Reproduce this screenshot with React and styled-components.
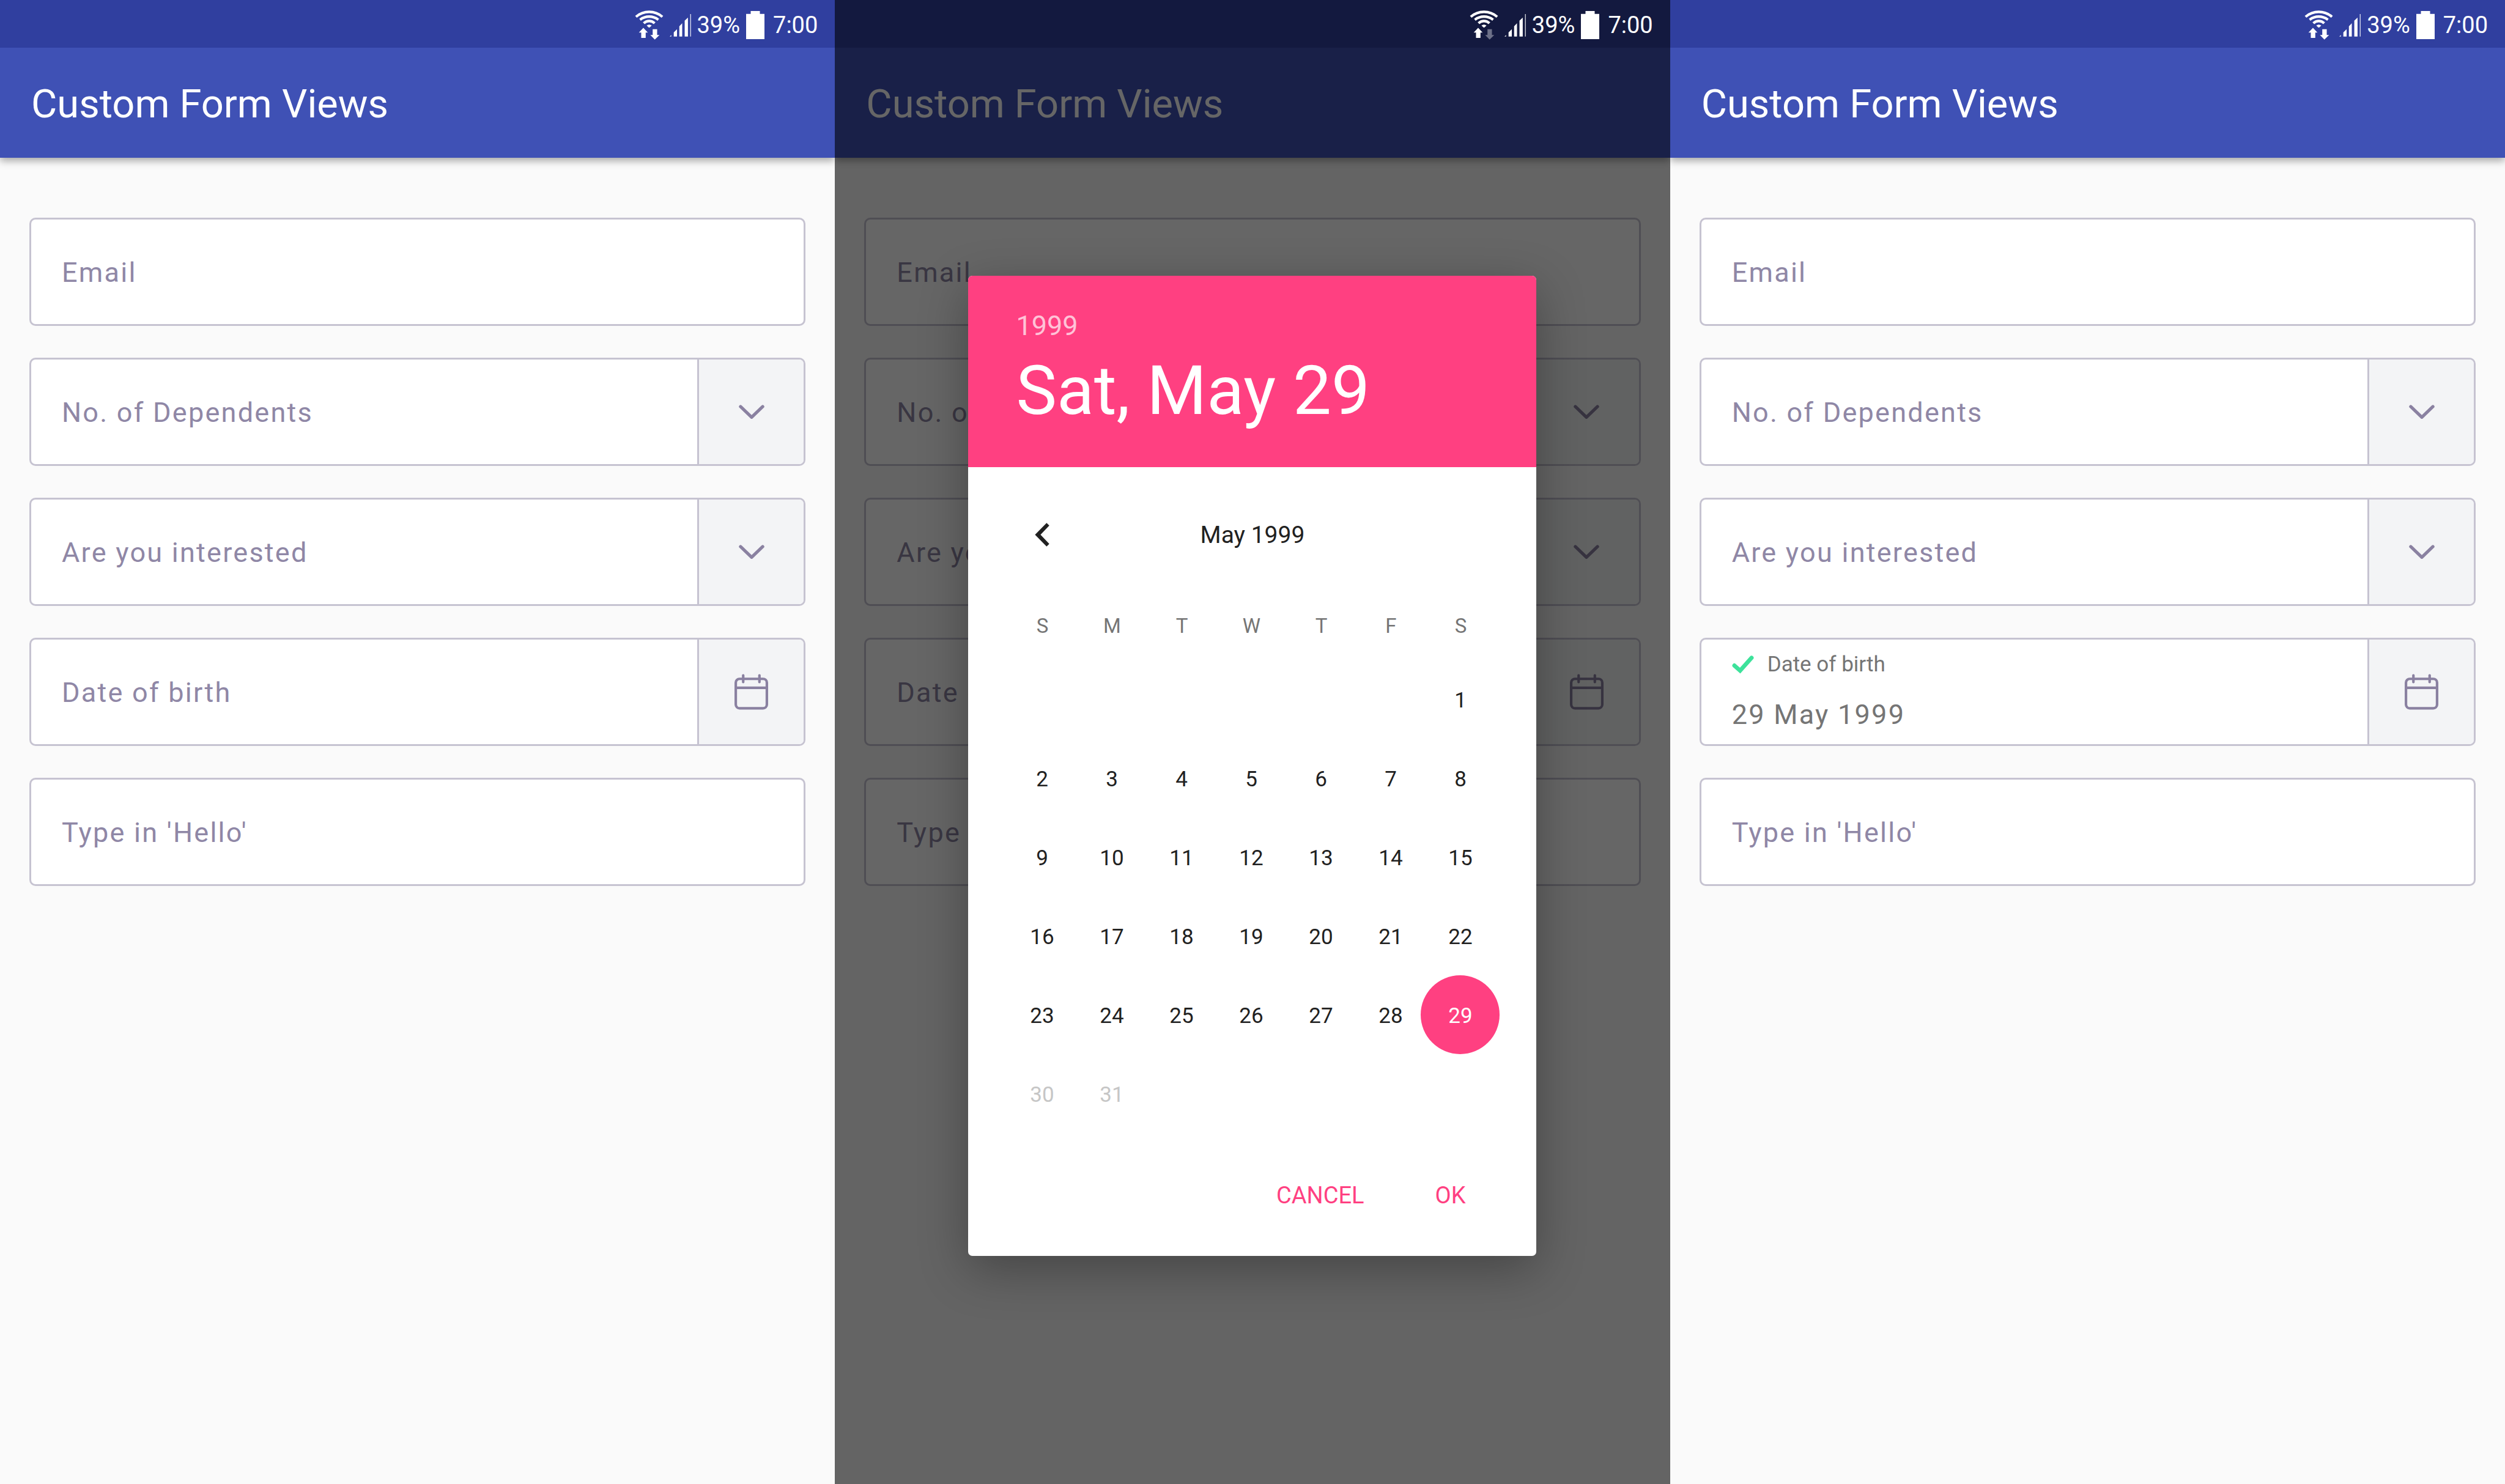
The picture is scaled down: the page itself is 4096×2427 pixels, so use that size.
import React, { useId, useState } from "react";
import styled, { createGlobalStyle } from "styled-components";

const color = {
  primary: "#3f51b5",
  primaryDark: "#303f9f",
  primaryDarkDimmed: "#13193f",
  accent: "#ff4081",
  page: "#fafafa",
  border: "#c6c3d1",
  addon: "#f3f4f6",
  hint: "#8f87a6",
  icon: "#8a81a1",
  value: "#757575",
  text: "#212121",
  success: "#3de29b",
};

const GlobalStyle = createGlobalStyle`
  *, *::before, *::after { box-sizing: border-box; }
  body { margin: 0; background: ${color.page}; }
  body, button, input, select { font-family: Roboto, "Noto Sans", sans-serif; }
  button { border: 0; padding: 0; background: none; cursor: pointer; }
  svg { display: block; flex: none; }
`;

const Screens = styled.main`
  display: grid;
  grid-template-columns: repeat(3, minmax(0, 1fr));
  min-height: 100vh;
`;

const Screen = styled.section`
  position: relative;
  overflow: hidden;
  background: ${color.page};
`;

const StatusBar = styled.div`
  position: relative;
  z-index: 3;
  display: flex;
  justify-content: flex-end;
  align-items: center;
  gap: 10px;
  height: 78px;
  padding: 4px 28px 0 0;
  background: ${(p) => (p.$dimmed ? color.primaryDarkDimmed : color.primaryDark)};
  color: #fff;
  font-size: 38px;
  line-height: 46px;
`;

const Clock = styled.time`
  margin-left: 4px;
`;

const Toolbar = styled.header`
  display: flex;
  align-items: center;
  height: 180px;
  padding: 4px 51px 0;
  background: ${color.primary};
  box-shadow: 0 5px 12px rgba(0, 0, 0, 0.34);
`;

const Title = styled.h1`
  margin: 0;
  color: #fff;
  font-size: 65px;
  font-weight: 400;
  line-height: 80px;
`;

const Form = styled.form`
  display: flex;
  flex-direction: column;
  gap: 52px;
  padding: 98px 48px;
`;

const Field = styled.div`
  display: flex;
  height: 177px;
  overflow: hidden;
  border: 3px solid ${color.border};
  border-radius: 10px;
  background: #fff;
`;

const controlText = `
  min-width: 0;
  border: 0;
  outline: 0;
  margin: 0;
  background: transparent;
  font-size: 45px;
  letter-spacing: 0.05em;
`;

const TextInput = styled.input`
  ${controlText}
  flex: 1;
  padding: 2px 50px 0;
  color: ${color.value};
  &::placeholder { color: ${color.hint}; opacity: 1; }
`;

const Select = styled.select`
  ${controlText}
  flex: 1;
  appearance: none;
  padding: 2px 50px 0;
  color: ${color.hint};
`;

const FilledControl = styled.div`
  display: flex;
  flex: 1;
  flex-direction: column;
  gap: 22px;
  min-width: 0;
  padding: 18px 50px 0;
`;

const FloatingLabel = styled.label`
  display: flex;
  align-items: center;
  gap: 22px;
  color: ${color.value};
  font-size: 35px;
  line-height: 46px;
`;

const FilledInput = styled.input`
  ${controlText}
  height: 72px;
  padding: 0;
  color: ${color.value};
`;

const addonBox = `
  display: grid;
  place-items: center;
  flex: none;
  width: 174px;
  border-left: 3px solid ${color.border};
  background: ${color.addon};
`;

const SelectAddon = styled.label`
  ${addonBox}
`;

const AddonButton = styled.button`
  ${addonBox}
`;

const Scrim = styled.div`
  position: absolute;
  inset: 0;
  z-index: 2;
  display: grid;
  place-items: center;
  padding-top: 78px;
  background: rgba(0, 0, 0, 0.6);
`;

const Dialog = styled.div`
  width: 929px;
  overflow: hidden;
  border-radius: 7px;
  background: #fff;
  color: ${color.text};
`;

const DialogShadow = styled.div`
  border-radius: 7px;
  box-shadow: 0 22px 80px rgba(0, 0, 0, 0.31);
`;

const DialogHeader = styled.div`
  display: flex;
  flex-direction: column;
  align-items: flex-start;
  gap: 12px;
  padding: 54px 78px 59px;
  background: ${color.accent};
`;

const YearButton = styled.button`
  color: rgba(255, 255, 255, 0.7);
  font-size: 45px;
  line-height: 56px;
`;

const DateHeading = styled.h2`
  margin: 0;
  color: #fff;
  font-size: 112px;
  font-weight: 400;
  line-height: 132px;
`;

const MonthNav = styled.div`
  display: grid;
  grid-template-columns: 114px 1fr 114px;
  align-items: center;
  height: 114px;
  margin: 53px 64px 36px;
`;

const NavButton = styled.button`
  display: grid;
  place-items: center;
  height: 114px;
`;

const MonthName = styled.h3`
  margin: 0;
  padding-top: 2px;
  font-size: 39px;
  font-weight: 400;
  line-height: 46px;
  text-align: center;
`;

const CalendarWrap = styled.div`
  padding: 0 67px 0 64px;
`;

const Calendar = styled.table`
  width: 100%;
  table-layout: fixed;
  border-collapse: collapse;
`;

const Weekday = styled.th`
  height: 112px;
  padding: 0;
  color: ${color.value};
  font-size: 33px;
  font-weight: 400;
  text-align: center;
`;

const DayCell = styled.td`
  height: 129px;
  padding: 0;
`;

const DayButton = styled.button`
  display: block;
  width: 129px;
  height: 129px;
  margin: 0 -8px;
  padding-top: 3px;
  border-radius: 50%;
  background: ${(p) => (p.$selected ? color.accent : "transparent")};
  color: ${(p) => (p.$selected ? "#fff" : p.disabled ? "#c6c6c6" : color.text)};
  font-size: 35px;
`;

const Actions = styled.div`
  display: flex;
  justify-content: flex-end;
  gap: 60px;
  padding: 42px 88px 39px 0;
`;

const ActionButton = styled.button`
  height: 120px;
  padding: 0 28px;
  color: ${color.accent};
  font-size: 38px;
`;

function WifiIcon({ idle }) {
  return (
    <svg width="47" height="48" viewBox="100 50 148 151" fill="none" aria-hidden="true">
      <g stroke="#fff" strokeWidth="13">
        <path d="M106 83A103 103 0 0 1 242 83" />
        <path d="M127 98A77 77 0 0 1 221 98" />
        <path d="M146 116A40 40 0 0 1 202 116" />
      </g>
      <path d="M161 128Q174 118 187 128L177 137Q174 139 171 137Z" fill="#fff" />
      <path d="M144 140L167 164H156V192H133V164H121Z" fill="#fff" />
      <path d="M203 200L180 177H192V147H215V177H227Z" fill="#fff" opacity={idle ? 0.38 : 1} />
    </svg>
  );
}

function SignalIcon() {
  return (
    <svg width="35" height="37" viewBox="280 75 111 118" fill="#fff" aria-hidden="true">
      <path d="M280 192L288 184V192ZM301 192V171L318 154V192ZM330 192V139L345 123V192ZM358 192V109L375 93V192ZM387 75H390.5V192H387Z" />
    </svg>
  );
}

function BatteryIcon() {
  return (
    <svg width="30" height="46" viewBox="675 54 96 147" fill="#fff" aria-hidden="true">
      <path d="M699 54H747V69H771V201H675V69H699Z" />
    </svg>
  );
}

function ChevronIcon() {
  return (
    <svg width="42" height="24" viewBox="0 0 44 25" fill="none" stroke={color.icon} strokeWidth="5.4" strokeLinecap="round" strokeLinejoin="round" aria-hidden="true">
      <path d="M3 3L22 21.2L41 3" />
    </svg>
  );
}

function CalendarIcon() {
  return (
    <svg width="55" height="59" viewBox="0 0 58 62" fill="none" stroke={color.icon} strokeWidth="4.4" strokeLinecap="round" aria-hidden="true">
      <rect x="2.2" y="8.6" width="53.6" height="50.8" rx="6.5" />
      <path d="M2.2 24H55.8M15 2.5V14M43 2.5V14" />
    </svg>
  );
}

function CheckIcon() {
  return (
    <svg width="36" height="30" viewBox="0 0 38 32" fill="none" stroke={color.success} strokeWidth="7.2" strokeLinecap="round" strokeLinejoin="miter" aria-hidden="true">
      <path d="M4 17.5L14 26.5L34 4" />
    </svg>
  );
}

function BackIcon() {
  return (
    <svg width="24" height="39" viewBox="0 0 25 41" fill={color.text} aria-hidden="true">
      <path d="M20.2 0.2L24.8 4.8L9.8 20.5L24.8 36.2L20.2 40.8L0.3 20.5Z" />
    </svg>
  );
}

function SelectField({ label, options }) {
  const id = useId();
  return (
    <Field>
      <Select id={id} aria-label={label} defaultValue="">
        <option value="">{label}</option>
        {options.map((option) => (
          <option key={option}>{option}</option>
        ))}
      </Select>
      <SelectAddon htmlFor={id}>
        <ChevronIcon />
      </SelectAddon>
    </Field>
  );
}

function DateField({ label, value }) {
  const id = useId();
  return (
    <Field>
      {value ? (
        <FilledControl>
          <FloatingLabel htmlFor={id}>
            <CheckIcon />
            {label}
          </FloatingLabel>
          <FilledInput id={id} type="text" value={value} readOnly />
        </FilledControl>
      ) : (
        <TextInput id={id} type="text" placeholder={label} aria-label={label} readOnly />
      )}
      <AddonButton type="button" aria-label="Choose date">
        <CalendarIcon />
      </AddonButton>
    </Field>
  );
}

function FormScreen({ dimmed, birthDate, children }) {
  return (
    <Screen>
      <StatusBar $dimmed={dimmed}>
        <WifiIcon idle={dimmed} />
        <SignalIcon />
        <span>39%</span>
        <BatteryIcon />
        <Clock>7:00</Clock>
      </StatusBar>
      <Toolbar>
        <Title>Custom Form Views</Title>
      </Toolbar>
      <Form>
        <Field>
          <TextInput type="email" placeholder="Email" aria-label="Email" />
        </Field>
        <SelectField label="No. of Dependents" options={["0", "1", "2", "3"]} />
        <SelectField label="Are you interested" options={["Yes", "No"]} />
        <DateField label="Date of birth" value={birthDate} />
        <Field>
          <TextInput type="text" placeholder="Type in 'Hello'" aria-label="Type in 'Hello'" />
        </Field>
      </Form>
      {children}
    </Screen>
  );
}

const weekdays = ["S", "M", "T", "W", "T", "F", "S"];
const firstWeekday = 6;
const daysInMonth = 31;
const lastAllowedDay = 29;

const weeks = Array.from({ length: 6 }, (_, week) =>
  Array.from({ length: 7 }, (_, column) => {
    const day = week * 7 + column - firstWeekday + 1;
    return day >= 1 && day <= daysInMonth ? day : null;
  })
);

function weekdayName(day) {
  return ["Sun", "Mon", "Tue", "Wed", "Thu", "Fri", "Sat"][(day - 1 + firstWeekday) % 7];
}

function DatePicker() {
  const [selected, setSelected] = useState(29);
  return (
    <Scrim>
      <DialogShadow>
        <Dialog role="dialog" aria-label="Choose date">
          <DialogHeader>
            <YearButton type="button">1999</YearButton>
            <DateHeading>{`${weekdayName(selected)}, May ${selected}`}</DateHeading>
          </DialogHeader>
          <MonthNav>
            <NavButton type="button" aria-label="Previous month">
              <BackIcon />
            </NavButton>
            <MonthName>May 1999</MonthName>
          </MonthNav>
          <CalendarWrap>
            <Calendar>
              <thead>
                <tr>
                  {weekdays.map((name, i) => (
                    <Weekday key={i} scope="col">{name}</Weekday>
                  ))}
                </tr>
              </thead>
              <tbody>
                {weeks.map((week, i) => (
                  <tr key={i}>
                    {week.map((day, j) => (
                      <DayCell key={j}>
                        {day && (
                          <DayButton
                            type="button"
                            $selected={day === selected}
                            disabled={day > lastAllowedDay}
                            onClick={() => setSelected(day)}
                          >
                            {day}
                          </DayButton>
                        )}
                      </DayCell>
                    ))}
                  </tr>
                ))}
              </tbody>
            </Calendar>
          </CalendarWrap>
          <Actions>
            <ActionButton type="button">CANCEL</ActionButton>
            <ActionButton type="button">OK</ActionButton>
          </Actions>
        </Dialog>
      </DialogShadow>
    </Scrim>
  );
}

export default function App() {
  return (
    <>
      <GlobalStyle />
      <Screens>
        <FormScreen />
        <FormScreen dimmed>
          <DatePicker />
        </FormScreen>
        <FormScreen birthDate="29 May 1999" />
      </Screens>
    </>
  );
}
